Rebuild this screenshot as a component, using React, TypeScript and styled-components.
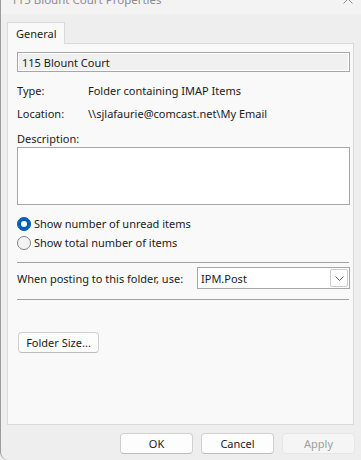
import styled, { createGlobalStyle } from 'styled-components';

const GlobalStyle = createGlobalStyle`
  html, body {
    margin: 0;
    padding: 0;
    background: #eeeeee;
  }
  body {
    font-family: 'Segoe UI', 'Noto Sans', sans-serif;
    font-size: 11px;
    color: #1b1b1b;
  }
`;

const Window = styled.div`
  width: 361px;
  height: 460px;
  box-sizing: border-box;
  border-left: 1px solid #9c9c9c;
  border-bottom-left-radius: 8px;
  background: #eeeeee;
  display: flex;
  flex-direction: column;
  overflow: hidden;
`;

const TitleBar = styled.div`
  height: 30px;
  margin-top: -16px;
  flex: none;
  display: flex;
  align-items: center;
  justify-content: space-between;
  padding: 0 8px 0 10px;
  background: #f3f3f3;
  color: #8c8c8c;
  font-size: 11.5px;
`;

const CloseIcon = styled.svg`
  width: 10px;
  height: 10px;
  stroke: #8c8c8c;
  stroke-width: 1;
`;

const Body = styled.div`
  padding: 8px 7px 0 6px;
  display: flex;
  flex-direction: column;
`;

const TabStrip = styled.div`
  display: flex;
  position: relative;
  z-index: 1;
  margin-bottom: -1px;
`;

const Tab = styled.div`
  height: 21px;
  padding: 0 7px 0 8px;
  display: flex;
  align-items: center;
  border: 1px solid #dadada;
  border-bottom: none;
  background: #f9f9f9;
`;

const Panel = styled.div`
  height: 382px;
  box-sizing: border-box;
  border: 1px solid #dadada;
  background: #f9f9f9;
  padding: 8px 3px 0 9px;
  display: flex;
  flex-direction: column;
`;

const NameBox = styled.div`
  height: 20px;
  box-sizing: border-box;
  border: 1px solid #a6a6a6;
  box-shadow: inset 0 0 0 1px #ffffff;
  background: #f0f0f0;
  display: flex;
  align-items: center;
  padding-left: 4px;
  margin-bottom: 7px;
`;

const InfoRow = styled.div`
  height: 23px;
  display: flex;
  align-items: center;
  white-space: nowrap;
`;

const InfoLabel = styled.span`
  width: 71px;
  flex: none;
`;

const FieldLabel = styled.div`
  height: 16px;
  margin-top: 5px;
  display: flex;
  align-items: center;
`;

const TextArea = styled.div`
  height: 58px;
  margin-top: 1px;
  box-sizing: border-box;
  border: 1px solid #a6a6a6;
  background: #ffffff;
`;

const RadioGroup = styled.div`
  margin-top: 9px;
  display: flex;
  flex-direction: column;
`;

const RadioRow = styled.label`
  height: 19px;
  display: flex;
  align-items: center;
  gap: 3px;
  white-space: nowrap;
`;

const RadioDot = styled.span<{ $checked?: boolean }>`
  width: 14px;
  height: 14px;
  box-sizing: border-box;
  border-radius: 50%;
  flex: none;
  display: flex;
  align-items: center;
  justify-content: center;
  background: ${(p) => (p.$checked ? '#005fb8' : '#f3f3f3')};
  border: 1px solid ${(p) => (p.$checked ? '#005fb8' : '#858585')};

  &::after {
    content: '';
    display: ${(p) => (p.$checked ? 'block' : 'none')};
    width: 6px;
    height: 6px;
    border-radius: 50%;
    background: #ffffff;
  }
`;

const Separator = styled.div`
  height: 1px;
  margin: 10px 1px 0 0;
  background: #a0a0a0;
`;

const PostingRow = styled.div`
  height: 22px;
  margin-top: 4px;
  display: flex;
  align-items: center;
  justify-content: space-between;
  white-space: nowrap;
`;

const Select = styled.div`
  width: 153px;
  height: 22px;
  flex: none;
  box-sizing: border-box;
  border: 1px solid #a6a6a6;
  background: #ffffff;
  display: flex;
  align-items: center;
  justify-content: space-between;
  padding: 0 1px 0 3px;
`;

const SelectArrow = styled.span`
  width: 18px;
  height: 18px;
  box-sizing: border-box;
  border: 1px solid #cccccc;
  border-radius: 2px;
  display: flex;
  align-items: center;
  justify-content: center;

  svg {
    width: 9px;
    height: 5px;
    stroke: #606060;
    fill: none;
  }
`;

const Button = styled.button<{ $disabled?: boolean }>`
  width: 73px;
  height: 21px;
  box-sizing: border-box;
  padding: 0;
  border: 1px solid ${(p) => (p.$disabled ? '#e6e6e6' : '#d0d0d0')};
  border-bottom-color: ${(p) => (p.$disabled ? '#e6e6e6' : '#bcbcbc')};
  border-radius: 4px;
  background: ${(p) => (p.$disabled ? '#f5f5f5' : '#fdfdfd')};
  color: ${(p) => (p.$disabled ? '#9d9d9d' : '#1b1b1b')};
  font: inherit;
`;

const FolderSizeButton = styled(Button)`
  width: 81px;
  margin-top: 32px;
  margin-left: 1px;
  align-self: flex-start;
`;

const ButtonBar = styled.div`
  margin: 8px -1px 0 0;
  display: flex;
  justify-content: flex-end;
  gap: 8px;
`;

export default function App() {
  return (
    <>
      <GlobalStyle />
      <Window>
        <TitleBar>
          <span>115 Blount Court Properties</span>
          <CloseIcon viewBox="0 0 10 10">
            <path d="M0.5 0.5 L9.5 9.5 M9.5 0.5 L0.5 9.5" />
          </CloseIcon>
        </TitleBar>
        <Body>
          <TabStrip>
            <Tab>General</Tab>
          </TabStrip>
          <Panel>
            <NameBox>115 Blount Court</NameBox>
            <InfoRow>
              <InfoLabel>Type:</InfoLabel>
              <span>Folder containing IMAP Items</span>
            </InfoRow>
            <InfoRow>
              <InfoLabel>Location:</InfoLabel>
              <span>\\sjlafaurie@comcast.net\My Email</span>
            </InfoRow>
            <FieldLabel>Description:</FieldLabel>
            <TextArea />
            <RadioGroup>
              <RadioRow>
                <RadioDot $checked />
                Show number of unread items
              </RadioRow>
              <RadioRow>
                <RadioDot />
                Show total number of items
              </RadioRow>
            </RadioGroup>
            <Separator />
            <PostingRow>
              <span>When posting to this folder, use:</span>
              <Select>
                <span>IPM.Post</span>
                <SelectArrow>
                  <svg viewBox="0 0 9 5">
                    <path d="M0.5 0.5 L4.5 4.5 L8.5 0.5" />
                  </svg>
                </SelectArrow>
              </Select>
            </PostingRow>
            <Separator />
            <FolderSizeButton>Folder Size...</FolderSizeButton>
          </Panel>
          <ButtonBar>
            <Button>OK</Button>
            <Button>Cancel</Button>
            <Button $disabled>Apply</Button>
          </ButtonBar>
        </Body>
      </Window>
    </>
  );
}
